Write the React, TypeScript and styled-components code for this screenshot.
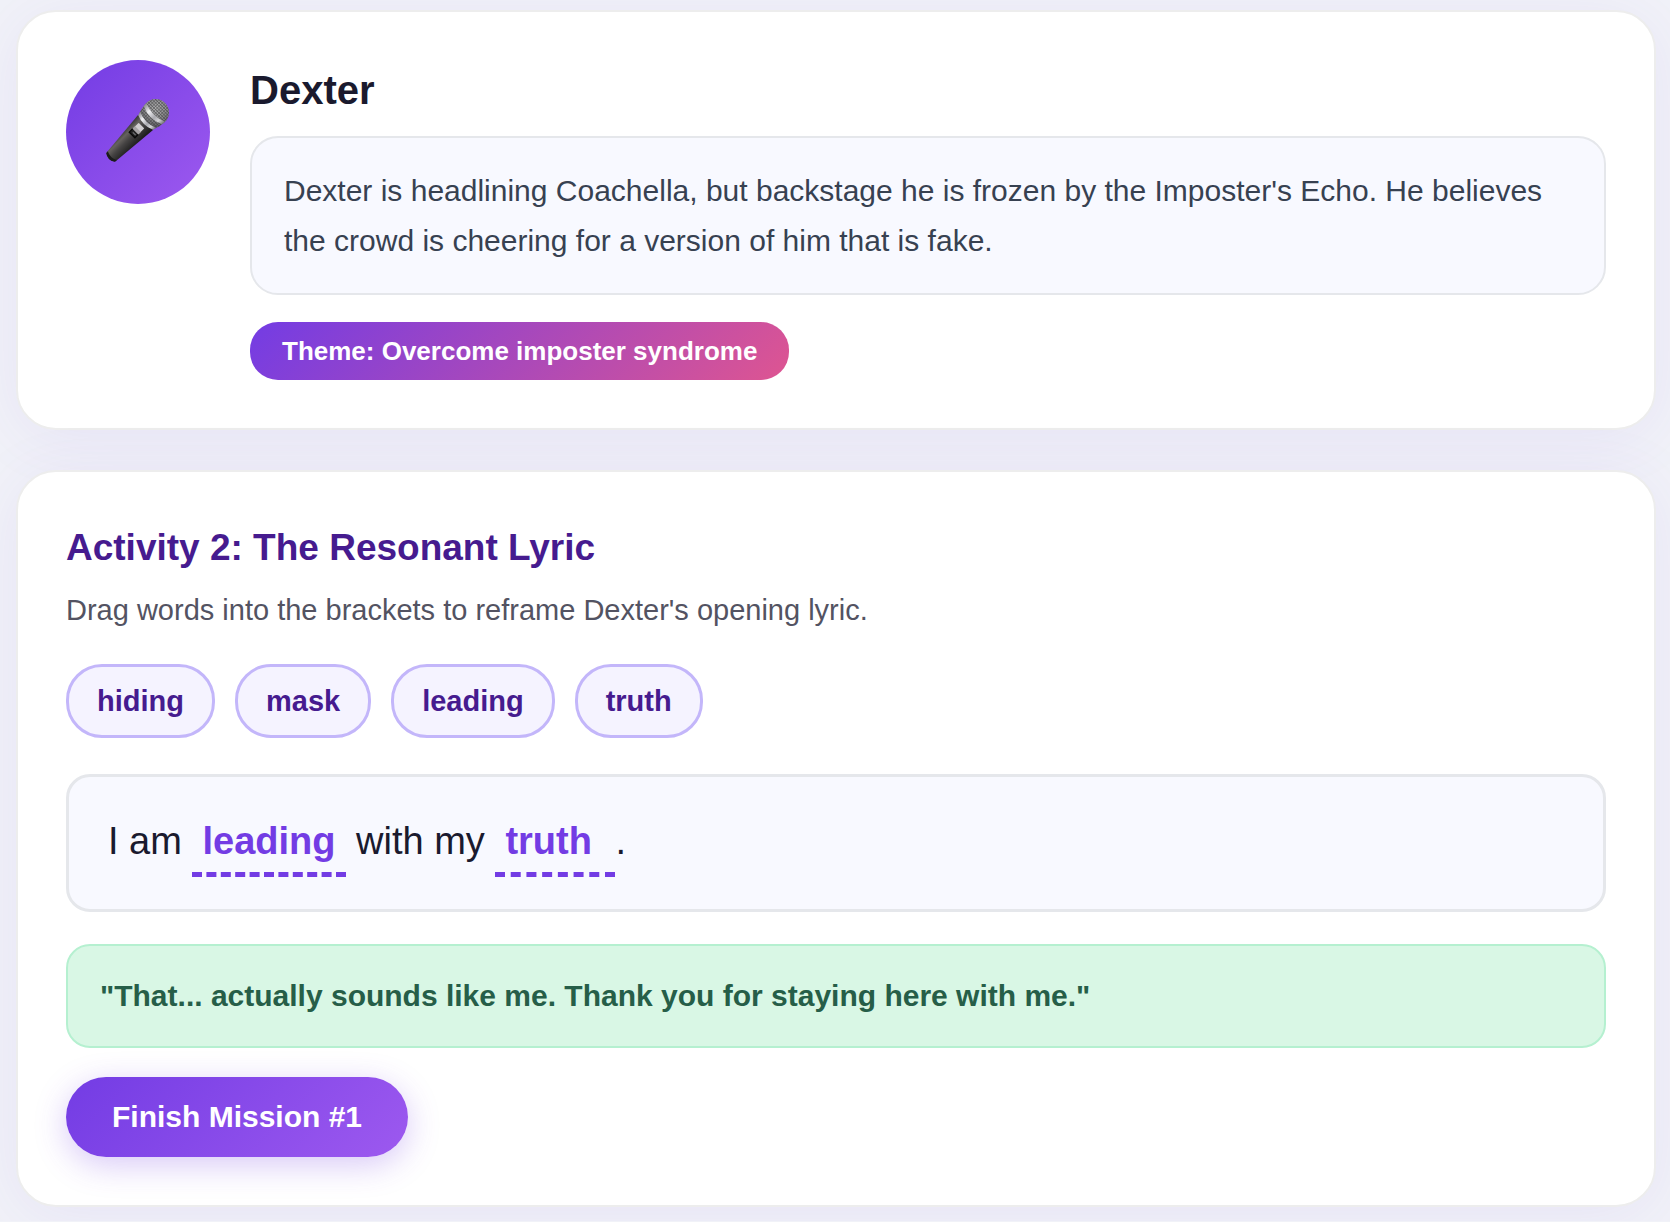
import React from "react";
import styled, { createGlobalStyle } from "styled-components";

const GlobalStyle = createGlobalStyle`
  *, *::before, *::after { box-sizing: border-box; }
  body {
    margin: 0;
    background: #f1f2f8;
    color: #1a1a2e;
    font-family: "Liberation Sans", Arial, Helvetica, sans-serif;
  }
  h1, h2, p { margin: 0; }
  button { font-family: inherit; cursor: pointer; }
`;

const Page = styled.main`
  display: flex;
  flex-direction: column;
  gap: 40px;
  padding: 10px 14px 14px 16px;
`;

const Card = styled.section`
  padding: 48px;
  background: #fff;
  border: 2px solid #ededed;
  border-radius: 40px;
  box-shadow: 0 8px 64px rgba(109, 60, 220, 0.08);
`;

const ProfileCard = styled(Card)`
  display: flex;
  align-items: flex-start;
  gap: 40px;
`;

const Avatar = styled.div`
  display: flex;
  flex: none;
  align-items: center;
  justify-content: center;
  width: 144px;
  height: 144px;
  border-radius: 50%;
  background: linear-gradient(135deg, #733ce4, #9d59ef);
`;

const ProfileBody = styled.div`
  display: flex;
  flex: 1;
  flex-direction: column;
  align-items: flex-start;
  min-width: 0;
`;

const Name = styled.h1`
  margin-bottom: 16px;
  font-size: 40px;
  line-height: 60px;
`;

const Story = styled.p`
  width: 100%;
  margin-bottom: 27px;
  padding: 28px 32px 27px;
  border: 2px solid #e5e7eb;
  border-radius: 28px;
  background: #f8f9ff;
  color: #374151;
  font-size: 30px;
  line-height: 50px;
`;

const ThemeTag = styled.span`
  padding: 0 32px;
  border-radius: 28px;
  background: linear-gradient(135deg, #733ce4, #de5591);
  color: #fff;
  font-size: 26px;
  font-weight: 700;
  line-height: 58px;
`;

const Title = styled.h2`
  margin-bottom: 11px;
  color: #461b8f;
  font-size: 37px;
  line-height: 55px;
`;

const Hint = styled.p`
  margin-bottom: 30px;
  color: #535362;
  font-size: 29px;
  line-height: 48px;
`;

const WordBank = styled.div`
  display: flex;
  flex-wrap: wrap;
  gap: 20px;
  margin-bottom: 36px;
`;

const Word = styled.button`
  height: 74px;
  padding: 0 28px;
  border: 3px solid #c3b6fa;
  border-radius: 36px;
  background: #f5f3ff;
  color: #461b8f;
  font-size: 29px;
  font-weight: 700;
`;

const Lyric = styled.p`
  margin-bottom: 32px;
  padding: 32px 39px;
  border: 3px solid #e5e7eb;
  border-radius: 24px;
  background: #f8f9ff;
  font-size: 38px;
  line-height: 64px;
`;

const Slot = styled.span`
  display: inline-block;
  min-width: 120px;
  padding: 0 10px 3px;
  border-bottom: 5px dashed #733ce4;
  color: #733ce4;
  font-weight: 700;
  line-height: 56px;
`;

const Reply = styled.p`
  margin-bottom: 29px;
  padding: 25px 32px;
  border: 2px solid #b5f0d0;
  border-radius: 24px;
  background: #d9f7e5;
  color: #265e48;
  font-size: 30px;
  font-weight: 700;
  line-height: 50px;
`;

const FinishButton = styled.button`
  display: block;
  height: 80px;
  padding: 0 46px;
  border: 0;
  border-radius: 40px;
  background: linear-gradient(135deg, #733ce4, #9d59ef);
  box-shadow: 0 8px 32px rgba(115, 60, 228, 0.28);
  color: #fff;
  font-size: 30px;
  font-weight: 700;
`;

const MicIcon = styled.svg`
  width: 64px;
  height: 64px;
  overflow: visible;
`;

function Microphone() {
  return (
    <MicIcon viewBox="138 150 192 192" role="img" aria-label="Microphone">
      <defs>
        <linearGradient id="handle" x1="0" x2="1">
          <stop offset="0" stopColor="#343434" />
          <stop offset="0.25" stopColor="#66625f" />
          <stop offset="0.5" stopColor="#454343" />
          <stop offset="1" stopColor="#171717" />
        </linearGradient>
        <linearGradient id="chrome" x1="0" x2="1">
          <stop offset="0" stopColor="#858589" />
          <stop offset="0.3" stopColor="#f0f0f3" />
          <stop offset="0.6" stopColor="#aaaab0" />
          <stop offset="0.8" stopColor="#d5d5d8" />
          <stop offset="1" stopColor="#707075" />
        </linearGradient>
        <radialGradient id="ball" cx="0.4" cy="0.35" r="0.7">
          <stop offset="0" stopColor="#b0b0b0" />
          <stop offset="0.6" stopColor="#8b8b8d" />
          <stop offset="1" stopColor="#5c5c60" />
        </radialGradient>
        <pattern id="mesh" width="7" height="7" patternUnits="userSpaceOnUse">
          <path d="M0 0H7M0 0V7" stroke="#353538" strokeWidth="3" />
        </pattern>
      </defs>
      <g transform="translate(287 187) rotate(45)">
        <path d="M-32 42 L-19 190 Q0 206 19 190 L32 42Z" fill="url(#handle)" />
        <path d="M-19 184Q0 194 19 184L18 192Q0 204 -18 192Z" fill="#1b1b1b" />
        <path d="M-40 0A40 40 0 0 1 40 0Q40 18 32 38Q0 52-32 38Q-40 18-40 0Z" fill="url(#ball)" />
        <path d="M-40 0A40 40 0 0 1 40 0Q40 18 32 38Q0 52-32 38Q-40 18-40 0Z" fill="url(#mesh)" opacity="0.75" />
        <path d="M-40 0Q0 17 40 0L39 12Q0 30-39 12Z" fill="url(#chrome)" />
        <path d="M-34 32Q0 47 34 32L31 43Q0 56-31 43Z" fill="url(#chrome)" />
        <rect x="-14" y="58" width="24" height="26" rx="2" fill="#d0cdcf" />
        <path d="M-14 73H10V82Q10 84 8 84H-12Q-14 84-14 82Z" fill="#a7a4a6" />
        <path d="M-14 84V98H10V84" fill="#242424" stroke="#090909" strokeWidth="4" />
        <path d="M-6 91H6" stroke="#77777a" strokeWidth="3" />
      </g>
    </MicIcon>
  );
}

const words = ["hiding", "mask", "leading", "truth"];

export default function App() {
  return (
    <>
      <GlobalStyle />
      <Page>
        <ProfileCard>
          <Avatar>
            <Microphone />
          </Avatar>
          <ProfileBody>
            <Name>Dexter</Name>
            <Story>
              Dexter is headlining Coachella, but backstage he is frozen by the Imposter's Echo. He
              believes the crowd is cheering for a version of him that is fake.
            </Story>
            <ThemeTag>Theme: Overcome imposter syndrome</ThemeTag>
          </ProfileBody>
        </ProfileCard>
        <Card>
          <Title>Activity 2: The Resonant Lyric</Title>
          <Hint>Drag words into the brackets to reframe Dexter's opening lyric.</Hint>
          <WordBank>
            {words.map((word) => (
              <Word key={word} type="button" draggable>
                {word}
              </Word>
            ))}
          </WordBank>
          <Lyric>
            I am <Slot>leading</Slot> with my <Slot>truth</Slot>.
          </Lyric>
          <Reply>"That... actually sounds like me. Thank you for staying here with me."</Reply>
          <FinishButton type="button">Finish Mission #1</FinishButton>
        </Card>
      </Page>
    </>
  );
}
